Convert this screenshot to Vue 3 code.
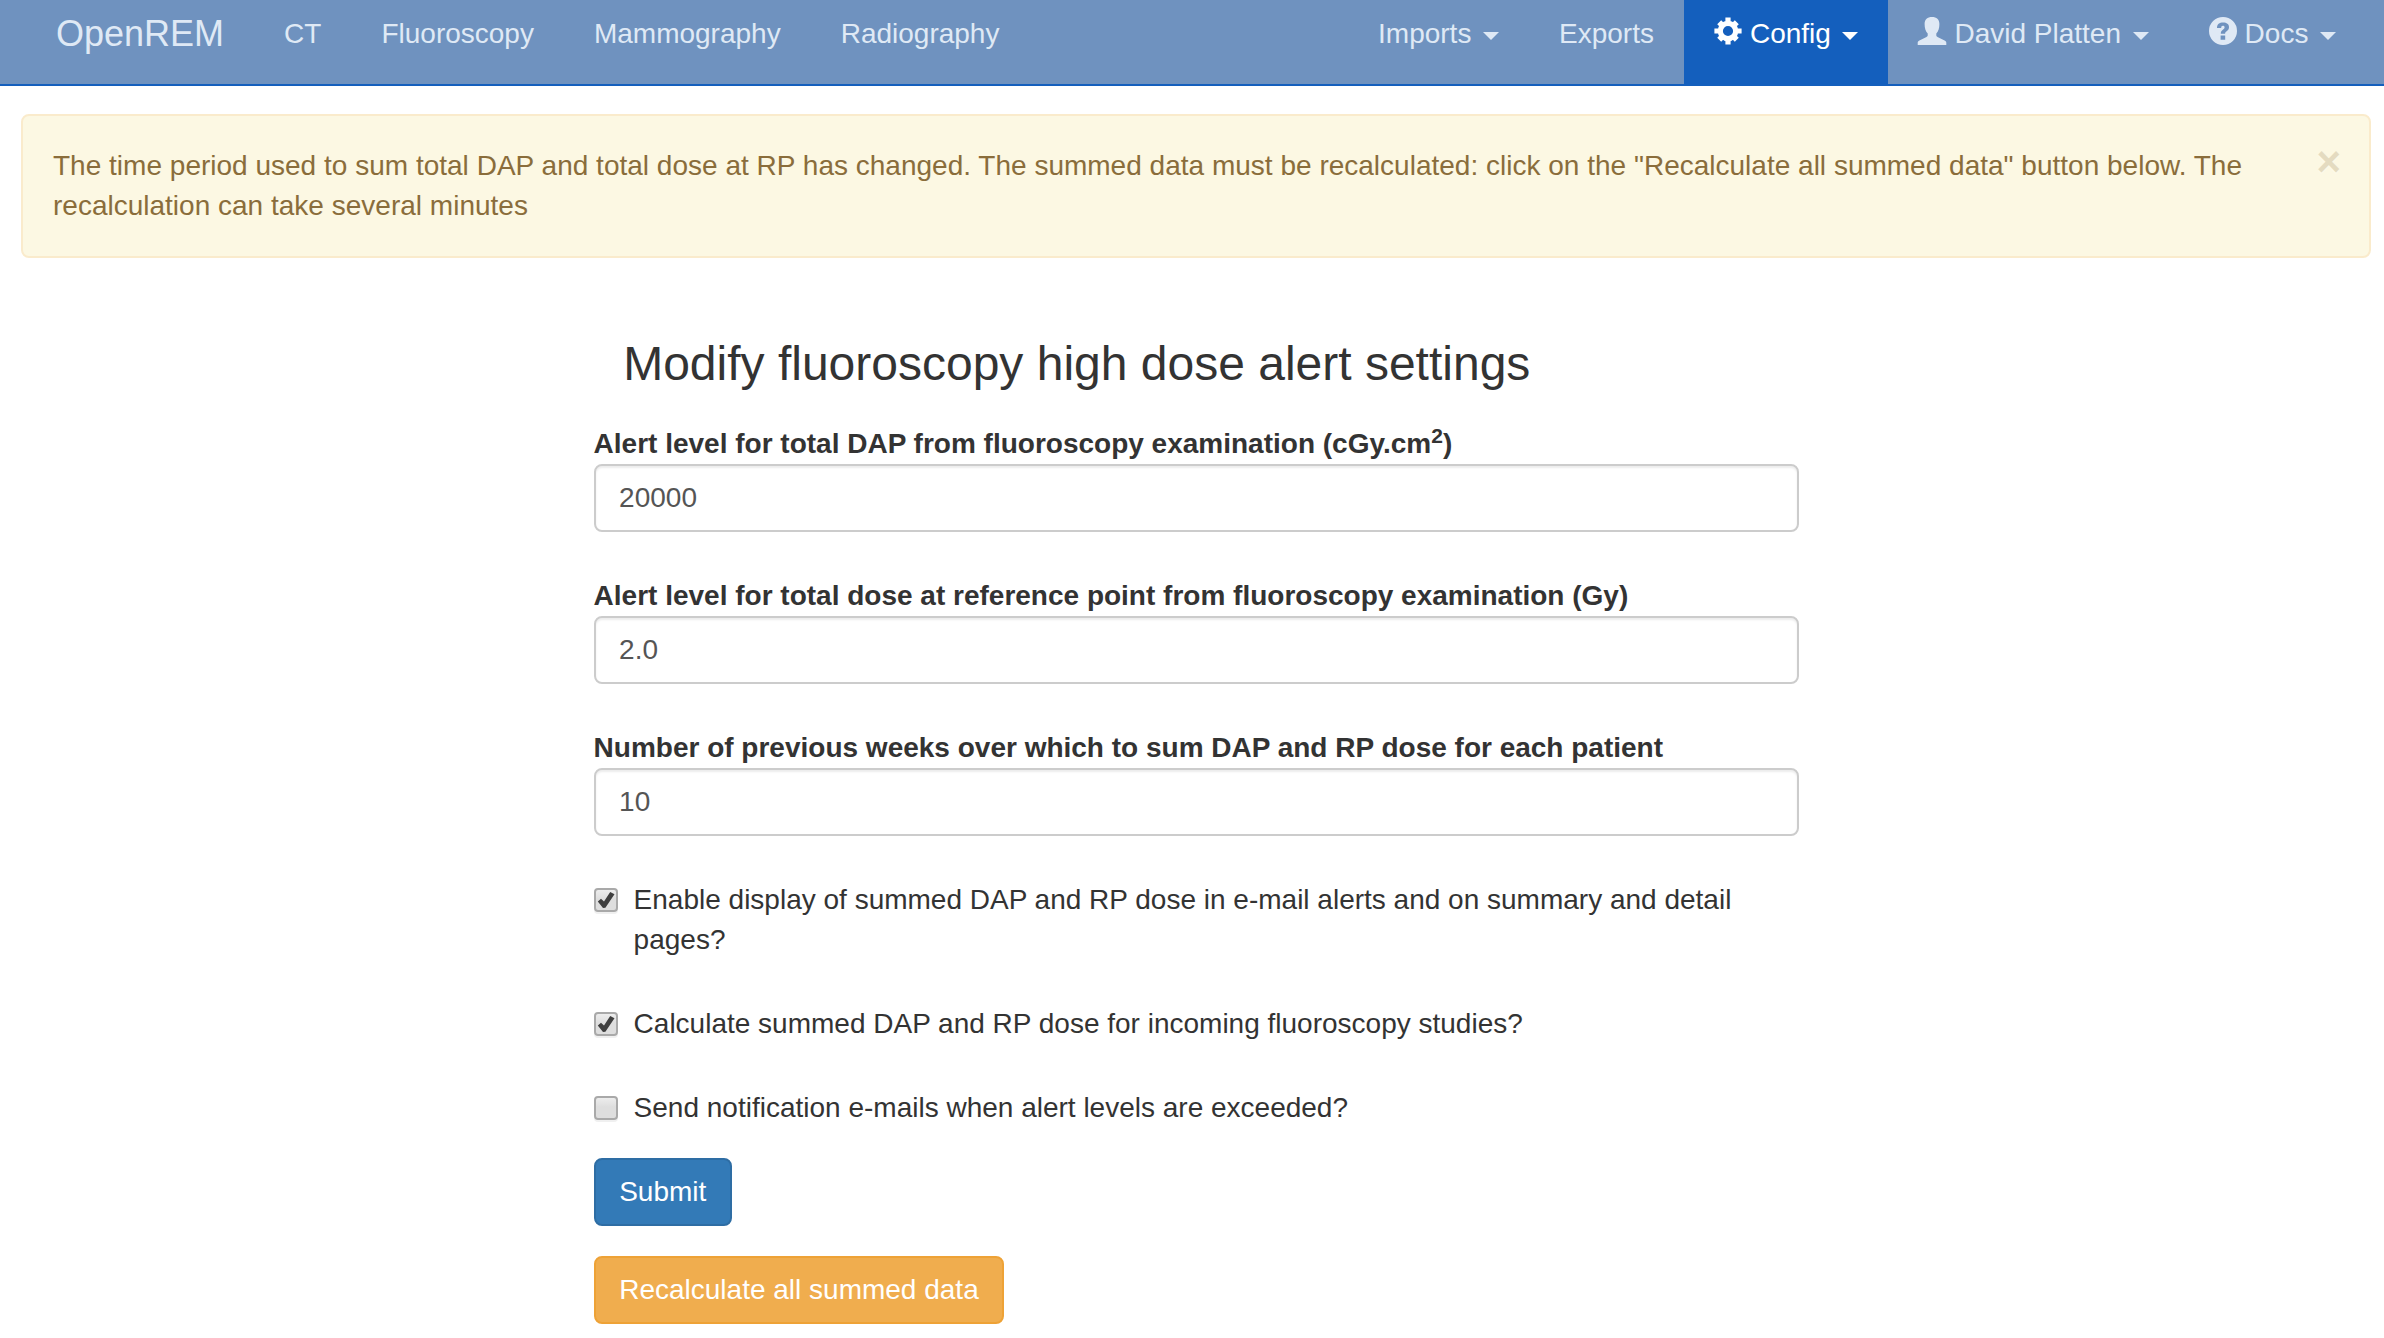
<script setup>
import { ref } from 'vue'

const leftLinks = ['CT', 'Fluoroscopy', 'Mammography', 'Radiography']

const rightLinks = [
  { text: 'Imports', caret: true },
  { text: 'Exports' },
  { text: 'Config', icon: 'cog', caret: true, open: true },
  { text: 'David Platten', icon: 'user', caret: true },
  { text: 'Docs', icon: 'help', caret: true }
]

const fields = ref([
  { id: 'dap', label: 'Alert level for total DAP from fluoroscopy examination (cGy.cm', sup: '2', tail: ')', value: '20000' },
  { id: 'rp', label: 'Alert level for total dose at reference point from fluoroscopy examination (Gy)', value: '2.0' },
  { id: 'weeks', label: 'Number of previous weeks over which to sum DAP and RP dose for each patient', value: '10' }
])

const checks = ref([
  { text: 'Enable display of summed DAP and RP dose in e-mail alerts and on summary and detail pages?', on: true },
  { text: 'Calculate summed DAP and RP dose for incoming fluoroscopy studies?', on: true },
  { text: 'Send notification e-mails when alert levels are exceeded?', on: false }
])
</script>

<template>
  <div class="page">
    <nav class="navbar">
      <a class="brand">OpenREM</a>
      <a v-for="link in leftLinks" :key="link" class="nav-link">{{ link }}</a>
      <div class="nav-right">
        <a v-for="link in rightLinks" :key="link.text" class="nav-link" :class="{ open: link.open }">
          <svg v-if="link.icon === 'cog'" class="glyph" viewBox="0 0 28 28" fill="none" stroke="currentColor">
            <circle cx="14" cy="14" r="7.7" stroke-width="5.2" />
            <path stroke-width="5.2" d="M14 5V.4M14 23v4.600M5 14H.4M23 14h4.600" />
            <path stroke-width="5.600" d="M8 8 5.200 5.200M20 8l2.800-2.800M8 20l-2.800 2.800M20 20l2.800 2.800" />
          </svg>
          <svg v-else-if="link.icon === 'user'" class="glyph" viewBox="0 0 28 28">
            <path fill="currentColor" d="M14 0c4.600 0 7.400 2.400 7.400 7 0 4.200-1 7.500-3.100 9.600v1.700c0 .8.400 1.200 1.200 1.600l7.100 3.600c1.100.6 1.700 1.100 1.700 2.200V28H-.300v-2.300c0-1.100.6-1.600 1.700-2.200l7.100-3.600c.8-.4 1.200-.8 1.200-1.600v-1.700C7.600 14.500 6.600 11.200 6.600 7 6.600 2.400 9.400 0 14 0z" />
          </svg>
          <svg v-else-if="link.icon === 'help'" class="glyph" viewBox="0 0 28 28">
            <path fill="currentColor" fill-rule="evenodd" d="M14 0a14 14 0 1 0 0 28a14 14 0 1 0 0-28zM8 11h4.200c0-1.500.4-2.200 1.700-2.200 1 0 1.700.5 1.700 1.500 0 1.200-.8 1.700-2 2.600-1.300 1-1.800 1.900-1.800 3.800h4.300c0-1.200.5-1.600 1.600-2.400 1.600-1.100 2.300-2.300 2.300-4.200 0-2.900-2.400-4.500-5.800-4.500C10.300 5.600 8 7.400 8 11zM11.600 18.500v4.300h4.600v-4.300z" />
          </svg>
          <span>{{ link.text }}</span>
          <b v-if="link.caret" class="caret"></b>
        </a>
      </div>
    </nav>

    <div class="alert">
      <p class="alert-text">
        The time period used to sum total DAP and total dose at RP has changed. The summed data must be recalculated: click on the "Recalculate all summed data" button below. The recalculation can take several minutes
      </p>
      <button type="button" class="close">×</button>
    </div>

    <form class="settings" @submit.prevent>
      <h3 class="title">Modify fluoroscopy high dose alert settings</h3>

      <div v-for="field in fields" :key="field.id" class="field">
        <label :for="field.id">{{ field.label }}<sup v-if="field.sup">{{ field.sup }}</sup>{{ field.tail }}</label>
        <input :id="field.id" v-model="field.value" type="text" class="control" />
      </div>

      <label v-for="check in checks" :key="check.text" class="check">
        <span class="box" @click="check.on = !check.on">
          <svg v-if="check.on" class="tick" viewBox="0 0 24 24">
            <path fill="#3f3f3f" d="M3.800 13.500 7 10.700 10 13.600 16.200 4 20.500 6.200 11.400 19.700 9 19.900z" />
          </svg>
        </span>
        <span>{{ check.text }}</span>
      </label>

      <div class="actions">
        <button type="submit" class="btn primary">Submit</button>
        <button type="button" class="btn warning">Recalculate all summed data</button>
      </div>
    </form>
  </div>
</template>

<style>
body {
  margin: 0;
  background: #fff;
}
</style>

<style scoped>
.page {
  height: 1338px;
  overflow: hidden;
  font-family: "Liberation Sans", Arial, sans-serif;
  font-size: 28px;
  line-height: 40px;
  color: #333;
}
.page * {
  box-sizing: border-box;
}
.navbar {
  display: flex;
  height: 86px;
  padding: 0 18px 0 26px;
  background: #6f92bf;
  border-bottom: 2px solid #145fbd;
  color: #dfe9f5;
}
.brand {
  padding: 14px 30px 0;
  font-size: 36px;
}
.nav-link {
  display: flex;
  padding: 14px 30px 0;
  white-space: nowrap;
}
.nav-right {
  display: flex;
  margin-left: auto;
}
.open {
  background: #145fbd;
  color: #fff;
}
.glyph {
  width: 28px;
  height: 28px;
  margin: 3px 8px 0 0;
  overflow: visible;
}
.caret {
  width: 0;
  height: 0;
  margin: 18px 0 0 11.6px;
  border-top: 8px solid;
  border-left: 8px solid transparent;
  border-right: 8px solid transparent;
}
.alert {
  display: flex;
  align-items: flex-start;
  justify-content: space-between;
  margin: 28px 13px 0 21px;
  padding: 30px 28px 30px 30px;
  border: 2px solid #faebcc;
  border-radius: 8px;
  background: #fcf8e3;
  color: #8a6d3b;
}
.alert-text {
  width: 2218px;
  margin: 0;
  word-spacing: 0.05px;
}
.close {
  margin: -5px 0 0;
  padding: 0;
  border: 0;
  background: none;
  font: bold 42px/42px "Liberation Sans", Arial, sans-serif;
  color: inherit;
  text-shadow: 0 2px 0 #fff;
  opacity: 0.2;
}
.settings {
  width: 1205px;
  margin: 79px 0 0 593.6px;
}
.title {
  margin: 0 0 34px 29.6px;
  font-size: 48px;
  font-weight: 400;
  line-height: 53px;
}
.field {
  display: flex;
  flex-direction: column;
  margin-bottom: 44px;
}
.field label {
  height: 40px;
  font-weight: 700;
  line-height: 40px;
}
sup {
  position: relative;
  top: -0.5em;
  font-size: 75%;
  line-height: 0;
  vertical-align: baseline;
}
.control {
  width: 100%;
  height: 68px;
  padding: 12px 23.5px;
  border: 2px solid #ccc;
  border-radius: 8px;
  background: #fff;
  box-shadow: inset 0 2px 2px rgba(0, 0, 0, 0.075);
  font: 28px/40px "Liberation Sans", Arial, sans-serif;
  color: #555;
  outline: 0;
}
.check {
  display: flex;
  align-items: flex-start;
  margin-bottom: 44px;
}
.box {
  flex: none;
  width: 24px;
  height: 24px;
  margin: 8px 16px 0 0;
  border: 2px solid #a9a9a9;
  border-radius: 4px;
  background: linear-gradient(#ededed, #dedede 45%, #dedede);
  box-shadow: 0 2px 0 #f0f0f0;
}
.tick {
  display: block;
  width: 24px;
  height: 24px;
  margin: -2px;
}
.actions {
  display: flex;
  flex-direction: column;
  align-items: flex-start;
  gap: 30px;
  margin-top: -14px;
}
.btn {
  height: 68px;
  padding: 12px 23.6px;
  border: 2px solid;
  border-radius: 8px;
  font: 28px/40px "Liberation Sans", Arial, sans-serif;
  color: #fff;
}
.primary {
  background: #337ab7;
  border-color: #2e6da4;
}
.warning {
  background: #f0ad4e;
  border-color: #eea236;
}
</style>
